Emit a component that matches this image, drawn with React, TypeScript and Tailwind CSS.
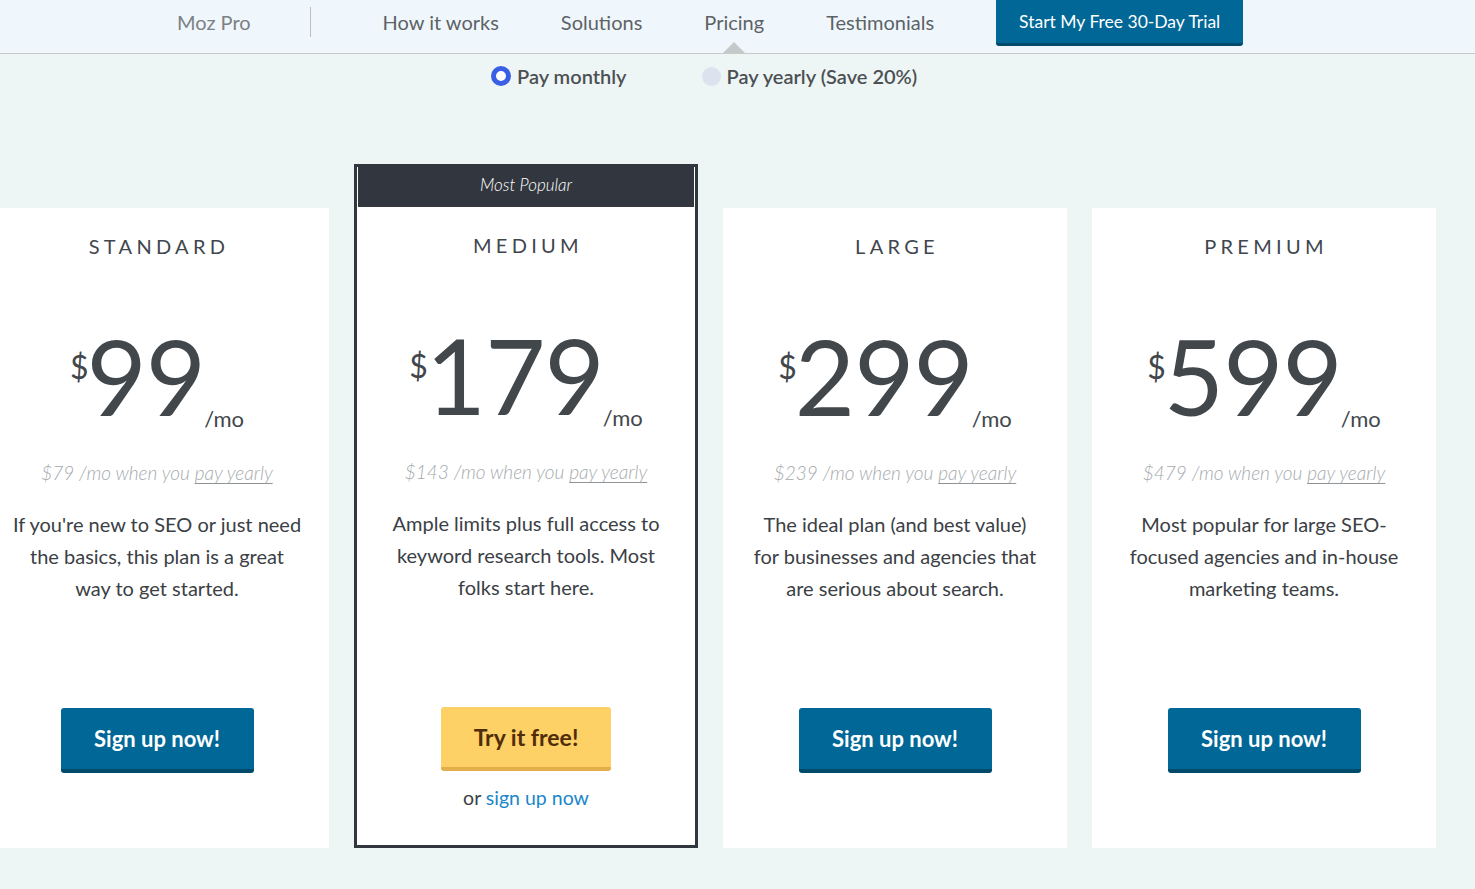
import React from "react";

type Plan = {
  name: string;
  price: string;
  yearly: string;
  blurb: string;
  popular?: boolean;
};

const plans: Plan[] = [
  {
    name: "Standard",
    price: "99",
    yearly: "$79",
    blurb: "If you're new to SEO or just need the basics, this plan is a great way to get started.",
  },
  {
    name: "Medium",
    price: "179",
    yearly: "$143",
    blurb: "Ample limits plus full access to keyword research tools. Most folks start here.",
    popular: true,
  },
  {
    name: "Large",
    price: "299",
    yearly: "$239",
    blurb: "The ideal plan (and best value) for businesses and agencies that are serious about search.",
  },
  {
    name: "Premium",
    price: "599",
    yearly: "$479",
    blurb: "Most popular for large SEO-focused agencies and in-house marketing teams.",
  },
];

const navItems = ["How it works", "Solutions", "Pricing", "Testimonials"];

const PlanBody = ({ plan }: { plan: Plan }) => (
  <div className="flex flex-col items-center pt-[26px]">
    <h3 className="text-[20px] leading-[24px] uppercase tracking-[4.3px] pl-[4px] text-[#3f464e]">
      {plan.name}
    </h3>

    {/* price */}
    <div className="mt-[66px] h-[106px] leading-none text-[#42474c] whitespace-nowrap text-center">
      <span className="text-[32px] align-[37px] mr-[-2px]">$</span>
      <span className="text-[104px] tracking-[-1px]">{plan.price}</span>
      <span className="text-[22px] align-[-11px] ml-[-1px]">/mo</span>
    </div>

    <p className="mt-[31px] text-[19px] leading-[24px] italic font-light text-[#a5aaad]">
      {plan.yearly} /mo when you{" "}
      <span className="underline decoration-[#8f9498] underline-offset-[3px]">pay yearly</span>
    </p>

    <p className="mt-[23px] h-[200px] w-[292px] text-center text-[20px] leading-[32px] text-[#3b4045]">
      {plan.blurb}
    </p>

    {plan.popular ? (
      <>
        <button className="h-[64px] w-[170px] rounded-[3px] bg-[#fed166] border-b-[4px] border-[#e2af4b] text-[23px] font-bold text-[#4f2d0a]">
          Try it free!
        </button>
        <p className="mt-[15px] text-[19.5px] leading-[24px] text-[#3b4045]">
          or <span className="text-[#1a87c9]">sign up now</span>
        </p>
      </>
    ) : (
      <button className="h-[65px] w-[193px] rounded-[3px] bg-[#006796] border-b-[4px] border-[#004a6b] text-[22px] font-bold text-white">
        Sign up now!
      </button>
    )}
  </div>
);

export default function App() {
  return (
    <div
      className="min-h-[889px] bg-[#eef6f5] overflow-hidden"
      style={{ fontFamily: "Lato, 'Open Sans', sans-serif" }}
    >
      {/* Top nav */}
      <header className="h-[54px] bg-[#f0f7fc] border-b border-[#c5cacb] flex items-start pl-[177px]">
        <div className="pt-[8px] text-[20px] leading-[28px] text-[#7b8084]">Moz Pro</div>
        <div className="ml-[59px] mt-[7px] w-px h-[30px] bg-[#b9bec1]" />
        <nav className="ml-[72px] flex items-start gap-[62px]">
          {navItems.map((item) => (
            <div
              key={item}
              className="relative h-[53px] pt-[8px] text-[20px] leading-[28px] text-[#5d6266]"
            >
              {item}
              {item === "Pricing" && (
                <span className="absolute bottom-0 left-1/2 -translate-x-1/2 w-0 h-0 border-l-[11px] border-r-[11px] border-b-[11px] border-l-transparent border-r-transparent border-b-[#c3c8c9]" />
              )}
            </div>
          ))}
        </nav>
        <button className="ml-[62px] h-[46px] w-[247px] pt-[2px] bg-[#006796] border-b-[3px] border-[#004a6b] rounded-b-[3px] text-[17.5px] text-white">
          Start My Free 30-Day Trial
        </button>
      </header>

      {/* Billing toggle */}
      <div className="mt-[8px] pl-[491px] flex items-center h-[28px] text-[20px] font-semibold text-[#4c5054]">
        <label className="flex items-center gap-[6px]">
          <span className="w-[20px] h-[20px] rounded-full border-[5px] border-[#3a5ee4] bg-white" />
          Pay monthly
        </label>
        <label className="ml-[75px] flex items-center gap-[6px]">
          <span className="w-[19px] h-[19px] rounded-full bg-[#dde2ef]" />
          Pay yearly (Save 20%)
        </label>
      </div>

      {/* Plans */}
      <div className="mt-[74px] ml-[-15px] flex gap-[25px]">
        {plans.map((plan) =>
          plan.popular ? (
            <div
              key={plan.name}
              className="w-[344px] h-[684px] shrink-0 bg-white border-[3px] border-[#32363e]"
            >
              <div className="h-[40px] mx-[1px] pb-[4px] bg-[#32363e] flex items-center justify-center text-[17px] italic font-light text-white">
                Most Popular
              </div>
              <PlanBody plan={plan} />
            </div>
          ) : (
            <div key={plan.name} className="mt-[44px] w-[344px] h-[640px] shrink-0 bg-white">
              <PlanBody plan={plan} />
            </div>
          )
        )}
      </div>
    </div>
  );
}
